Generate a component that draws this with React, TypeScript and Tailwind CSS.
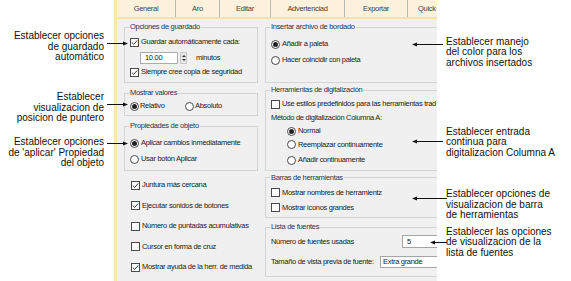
import type { ReactNode } from 'react'

const TABS = [
  { label: 'General', w: 'w-[59px] justify-center' },
  { label: 'Aro', w: 'w-[44px] justify-center' },
  { label: 'Editar', w: 'w-[51px] justify-center' },
  { label: 'Advertenciad', w: 'w-[74px] justify-center' },
  { label: 'Exportar', w: 'w-[63px] justify-center' },
  { label: 'Quick', w: 'w-[60px] justify-start pl-[10px]' },
]

function Check({ on }: { on?: boolean }) {
  return (
    <span className="flex h-[9px] w-[9px] shrink-0 items-center justify-center border border-[#4a4a4a] bg-white">
      {on && (
        <svg width="7" height="7" viewBox="0 0 7 7">
          <path d="M0.8 3.6 L2.7 5.4 L6.2 1.4" fill="none" stroke="#222" strokeWidth="0.9" />
        </svg>
      )}
    </span>
  )
}

function Radio({ on }: { on?: boolean }) {
  return (
    <span className="flex h-[9px] w-[9px] shrink-0 items-center justify-center rounded-full border border-[#4a4a4a] bg-white">
      {on && <span className="h-[5px] w-[5px] rounded-full bg-[#222]" />}
    </span>
  )
}

function Row({ children, className = '' }: { children: ReactNode; className?: string }) {
  return <div className={`flex h-[12px] items-center gap-[2px] whitespace-nowrap ${className}`}>{children}</div>
}

function Group({ title, className = '', children }: { title: string; className?: string; children: ReactNode }) {
  return (
    <fieldset className={`border border-[#d4d4d4] pl-[5px] ${className}`}>
      <legend className="-ml-px px-px leading-[10px] text-[#26374f]">{title}</legend>
      {children}
    </fieldset>
  )
}

function Note({ lines, className = '' }: { lines: string[]; className?: string }) {
  return (
    <div className={`leading-[10.5px] ${className}`}>
      {lines.map((l) => (
        <div key={l}>{l}</div>
      ))}
    </div>
  )
}

function Dialog() {
  return (
    <div className="flex h-full w-[323px] shrink-0 flex-col overflow-hidden border-l-[3px] border-[#f9e6b3] bg-[#f0f0f0] font-['Liberation_Sans',Arial,sans-serif] text-[7.5px] tracking-[-0.3px] text-[#222]">
      {/* tab strip */}
      <div className="flex h-[19px] shrink-0 border-b-2 border-[#fae2a2] bg-[#fcf1dc]">
        {TABS.map((t) => (
          <div key={t.label} className={`flex ${t.w} shrink-0 items-center border-r border-[#b9b9b9] text-[#444] last:border-r-0`}>
            {t.label}
          </div>
        ))}
      </div>

      <div className="flex gap-[7px] pl-[7px] pt-[3px]">
        {/* left column */}
        <div className="flex w-[134px] shrink-0 flex-col">
          <Group title="Opciones de guardado" className="pb-[4px]">
            <Row className="mt-[4px]">
              <Check on />
              <span>Guardar automáticamente cada:</span>
            </Row>
            <div className="ml-[10px] mt-[4px] flex h-[12px] items-center">
              <div className="flex h-[12px] w-[38px] items-center border border-[#abadb3] bg-white pl-[4px]">10.00</div>
              <div className="ml-[2px] flex h-[12px] w-[7px] flex-col items-center justify-center gap-[2px] border border-[#c8c8c8] bg-[#e8e8e8]">
                <span className="h-0 w-0 border-x-[2px] border-b-[2px] border-x-transparent border-b-[#333]" />
                <span className="h-0 w-0 border-x-[2px] border-t-[2px] border-x-transparent border-t-[#333]" />
              </div>
              <span className="ml-[9px]">minutos</span>
            </div>
            <Row className="mt-[2px]">
              <Check on />
              <span>Siempre cree copia de seguridad</span>
            </Row>
          </Group>

          <Group title="Mostrar valores" className="mt-[5px] pb-[3px]">
            <Row className="mt-[2px] gap-0">
              <div className="flex w-[53px] items-center gap-[1px]">
                <Radio on />
                <span>Relativo</span>
              </div>
              <div className="flex items-center gap-[1px]">
                <Radio />
                <span>Absoluto</span>
              </div>
            </Row>
          </Group>

          <Group title="Propiedades de objeto" className="mt-[5px] pb-[5px]">
            <Row className="mt-[6px] gap-[1px]">
              <Radio on />
              <span>Aplicar cambios inmediatamente</span>
            </Row>
            <Row className="mt-[4px] gap-[1px]">
              <Radio />
              <span>Usar botón Aplicar</span>
            </Row>
          </Group>

          <div className="ml-[7px] mt-[8px] flex flex-col gap-[8.5px]">
            <Row>
              <Check on />
              <span>Juntura más cercana</span>
            </Row>
            <Row>
              <Check on />
              <span>Ejecutar sonidos de botones</span>
            </Row>
            <Row>
              <Check />
              <span>Número de puntadas acumulativas</span>
            </Row>
            <Row>
              <Check />
              <span>Cursor en forma de cruz</span>
            </Row>
            <Row>
              <Check on />
              <span>Mostrar ayuda de la herr. de medida</span>
            </Row>
          </div>
        </div>

        {/* right column */}
        <div className="flex w-[200px] shrink-0 flex-col">
          <Group title="Insertar archivo de bordado" className="pb-[16px]">
            <Row className="mt-[6px] gap-[1px]">
              <Radio on />
              <span>Añadir a paleta</span>
            </Row>
            <Row className="mt-[4px] gap-[1px]">
              <Radio />
              <span>Hacer coincidir con paleta</span>
            </Row>
          </Group>

          <Group title="Herramientas de digitalización" className="mt-[2px] pb-[4px]">
            <Row className="mt-[3px]">
              <Check />
              <span>Use estilos predefinidos para las herramientas trad</span>
            </Row>
            <Row className="mt-[2px]">
              <span>Método de digitalización Columna A:</span>
            </Row>
            <div className="ml-[16px] flex flex-col">
              <Row className="mt-[1px] gap-[1px]">
                <Radio on />
                <span>Normal</span>
              </Row>
              <Row className="mt-[1.5px] gap-[1px]">
                <Radio />
                <span>Reemplazar continuamente</span>
              </Row>
              <Row className="mt-[3.5px] gap-[1px]">
                <Radio />
                <span>Añadir continuamente</span>
              </Row>
            </div>
          </Group>

          <Group title="Barras de herramientas" className="mt-[1.5px] pb-[3.5px]">
            <Row className="mt-[4px]">
              <Check />
              <span>Mostrar nombres de herramientz</span>
            </Row>
            <Row className="mt-[3px]">
              <Check />
              <span>Mostrar iconos grandes</span>
            </Row>
          </Group>

          <Group title="Lista de fuentes" className="mt-[4px] pb-[8.5px]">
            <div className="mt-[3px] flex h-[13px] items-center whitespace-nowrap">
              <span className="w-[131px] shrink-0">Número de fuentes usadas</span>
              <div className="flex h-[13px] w-[60px] items-center border border-[#a5a5a5] bg-white pl-[4px]">5</div>
            </div>
            <div className="mt-[7.5px] flex h-[12px] items-center whitespace-nowrap">
              <span className="w-[109px] shrink-0">Tamaño de vista previa de fuente:</span>
              <div className="flex h-[12px] w-[80px] items-center border border-[#a5a5a5] bg-white pl-[2px]">Extra grande</div>
            </div>
          </Group>
        </div>
      </div>
    </div>
  )
}

export default function App() {
  return (
    <div className="relative flex h-[281px] w-[571px] overflow-hidden bg-white font-['Liberation_Sans',Arial,sans-serif] text-[10px] text-[#111]">
      {/* left callouts */}
      <div className="flex w-[114px] shrink-0 flex-col pr-[10px] text-right">
        <Note className="mt-[31px]" lines={['Establecer opciones', 'de guardado', 'automático']} />
        <Note className="mt-[29.5px]" lines={['Establecer', 'visualizacion de', 'posicion de puntero']} />
        <Note className="mt-[13.5px]" lines={['Establecer opciones', "de 'aplicar' Propiedad", 'del objeto']} />
      </div>

      <Dialog />

      {/* right callouts */}
      <div className="flex flex-1 flex-col pl-[9px]">
        <Note className="mt-[36.5px]" lines={['Establecer manejo', 'del color para los', 'archivos insertados']} />
        <Note className="mt-[58.5px]" lines={['Establecer entrada', 'continua para', 'digitalizacion Columna A']} />
        <Note className="mt-[31px]" lines={['Establecer opciones de', 'visualizacion de barra', 'de herramientas']} />
        <Note className="mt-[6px]" lines={['Establecer las opciones', 'de visualizacion de la', 'lista de fuentes']} />
      </div>

      {/* leader lines */}
      <svg className="pointer-events-none absolute inset-0" width="571" height="281" viewBox="0 0 571 281">
        <g stroke="#111" strokeWidth="1">
          <line x1="107" y1="43.5" x2="124" y2="43.5" />
          <line x1="107" y1="104.5" x2="124" y2="104.5" />
          <line x1="107" y1="143.5" x2="124" y2="143.5" />
          <line x1="416" y1="44.5" x2="443" y2="44.5" />
          <line x1="416" y1="141.5" x2="443" y2="141.5" />
          <line x1="416" y1="198.5" x2="447" y2="198.5" />
          <line x1="434" y1="242.5" x2="447" y2="242.5" />
        </g>
        <g fill="#111">
          <polygon points="123,41.5 128,43.5 123,45.5" />
          <polygon points="123,102.5 128,104.5 123,106.5" />
          <polygon points="123,141.5 128,143.5 123,145.5" />
          <polygon points="417,42.5 412,44.5 417,46.5" />
          <polygon points="417,139.5 412,141.5 417,143.5" />
          <polygon points="417,196.5 412,198.5 417,200.5" />
          <polygon points="435,240.5 430,242.5 435,244.5" />
        </g>
      </svg>
    </div>
  )
}
